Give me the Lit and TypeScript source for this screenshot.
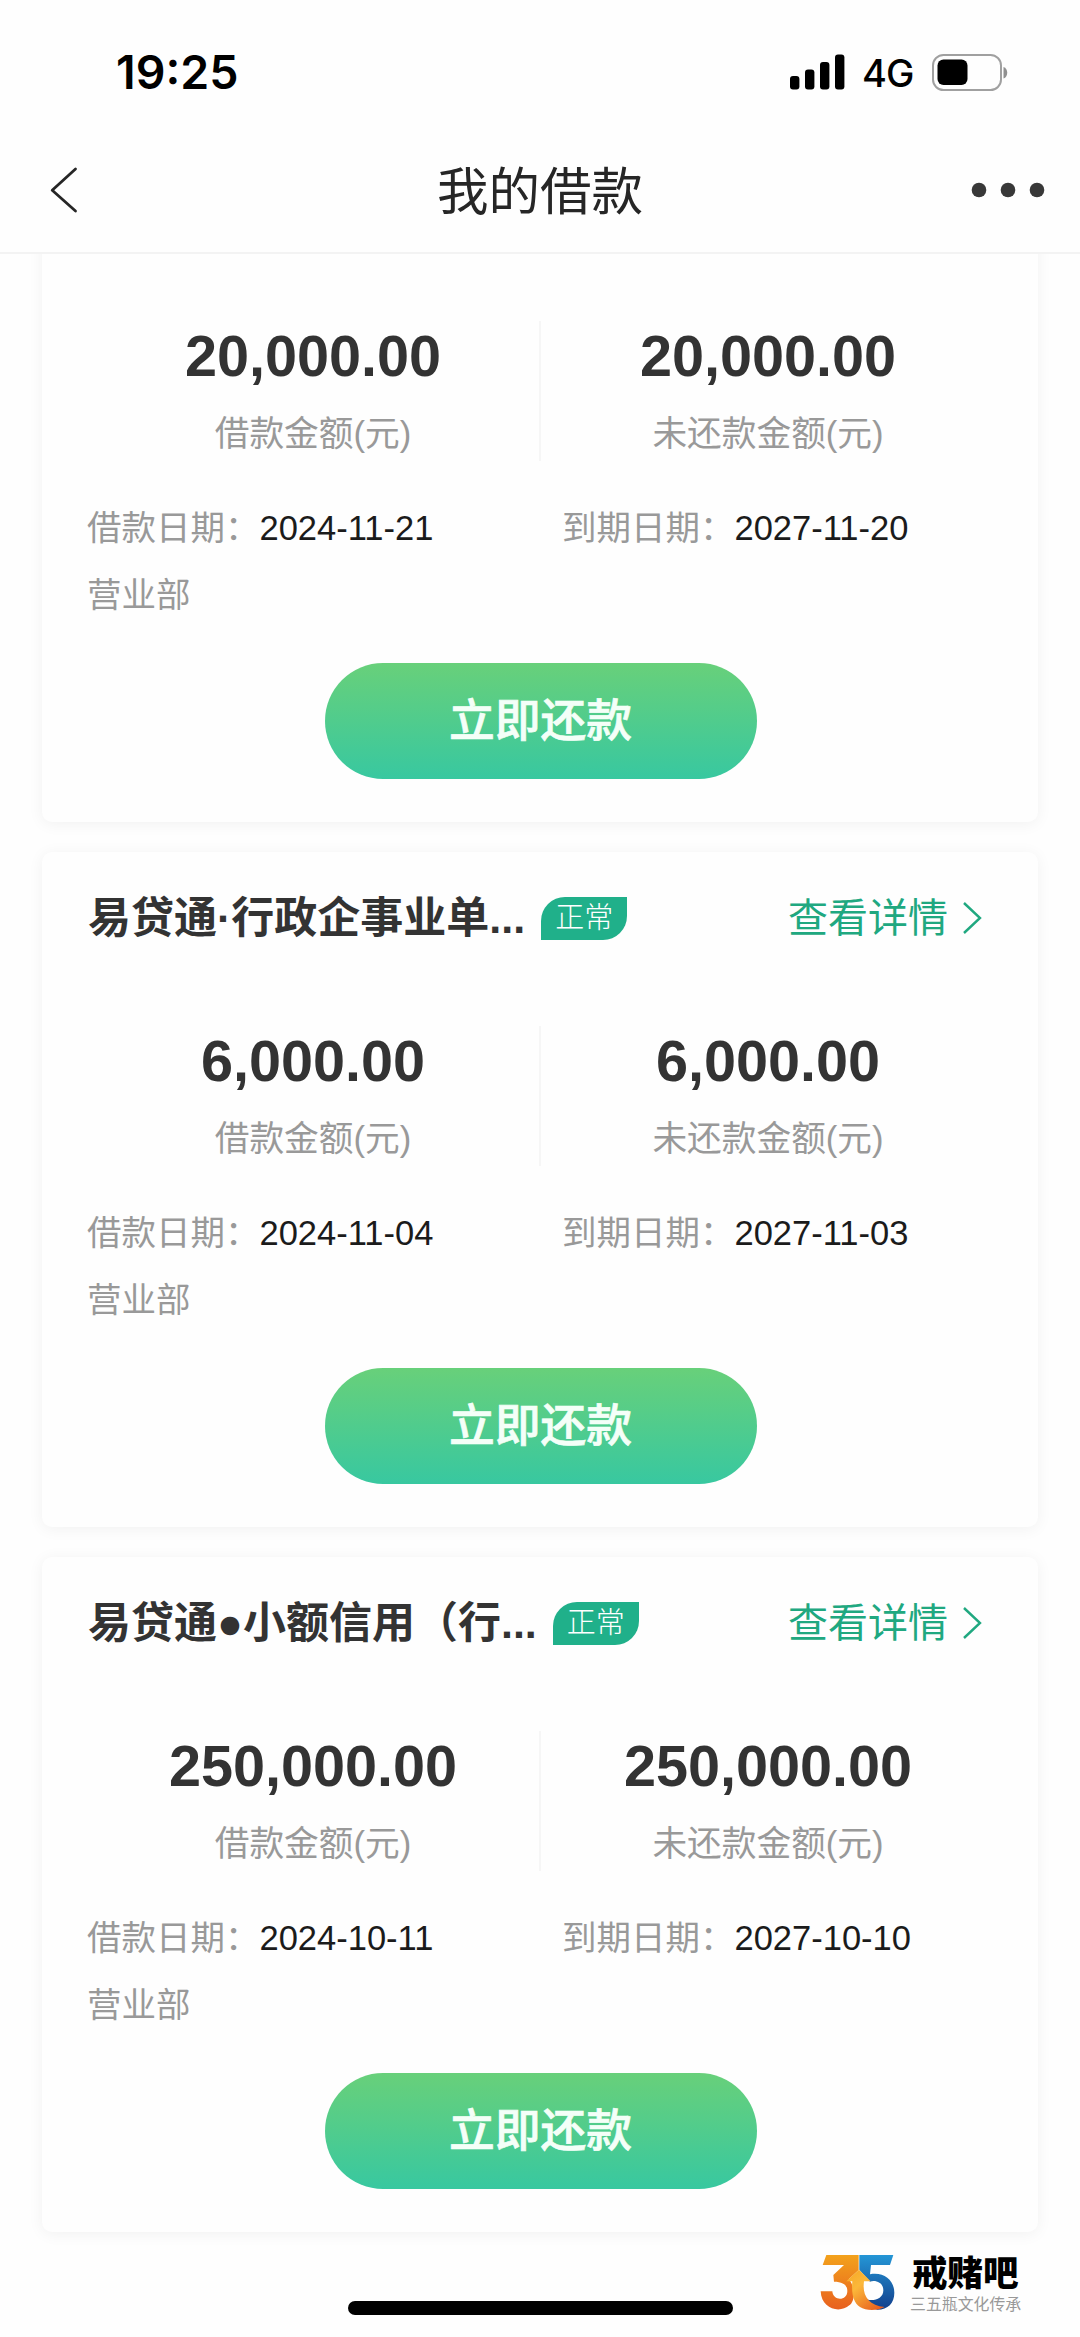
import { LitElement, html, css } from "lit";
import { customElement, property } from "lit/decorators.js";

const sans = css`"Liberation Sans", "Noto Sans CJK SC", sans-serif`;

interface Loan {
  title: string;
  status: string;
  amount: string;
  unpaid: string;
  start: string;
  due: string;
  branch: string;
}

const loans: Loan[] = [
  { title: "", status: "", amount: "20,000.00", unpaid: "20,000.00", start: "2024-11-21", due: "2027-11-20", branch: "营业部" },
  { title: "易贷通·行政企事业单...", status: "正常", amount: "6,000.00", unpaid: "6,000.00", start: "2024-11-04", due: "2027-11-03", branch: "营业部" },
  { title: "易贷通●小额信用（行...", status: "正常", amount: "250,000.00", unpaid: "250,000.00", start: "2024-10-11", due: "2027-10-10", branch: "营业部" },
];

@customElement("status-bar")
export class StatusBar extends LitElement {
  static styles = css`
    :host { display: flex; height: 127px; padding: 34px 72px 0 116px; box-sizing: border-box; align-items: flex-start; justify-content: space-between; color: #000; }
    .time { font: 600 46.5px/76px Inter, sans-serif; }
    .right { display: flex; align-items: center; height: 76px; }
    .net { font: 500 38px/76px Inter, sans-serif; letter-spacing: -1px; margin: 2px 17px 0 16px; width: 53px; }
    svg { display: block; }
  `;
  render() {
    return html`
      <span class="time">19:25</span>
      <div class="right">
        <svg width="56" height="36" viewBox="0 0 56 36">
          <rect x="0" y="22" width="9.4" height="13.5" rx="3"/>
          <rect x="15" y="15.5" width="9.4" height="20" rx="3"/>
          <rect x="30" y="8" width="9.4" height="27.5" rx="3"/>
          <rect x="45" y="0.5" width="9.4" height="35" rx="3"/>
        </svg>
        <span class="net">4G</span>
        <svg width="76" height="37" viewBox="0 0 76 37">
          <rect x="1" y="1" width="68" height="35" rx="10.5" fill="none" stroke="#a0a0a0" stroke-width="2"/>
          <rect x="5.5" y="5.5" width="30" height="25.5" rx="6"/>
          <path d="M71.500 13c5 1.500 5 10 0 11.500z" fill="#909090"/>
        </svg>
      </div>`;
  }
}

@customElement("nav-bar")
export class NavBar extends LitElement {
  static styles = css`
    :host { display: grid; grid-template-columns: 1fr auto 1fr; align-items: center; height: 127px; box-sizing: border-box; padding: 0 34px 0 49px; border-bottom: 2px solid #f3f3f3; }
    .title { font: 400 51.5px/76px ${sans}; color: #262626; margin: 4px 0 0 -15px; }
    .more { justify-self: end; }
    svg { display: block; }
  `;
  render() {
    return html`
      <svg width="30" height="48" viewBox="0 0 30 48"><path d="M26.500 3 3.200 24.300 26.500 45" fill="none" stroke="#262626" stroke-width="2.8" stroke-linecap="round" stroke-linejoin="round"/></svg>
      <span class="title">我的借款</span>
      <svg class="more" width="76" height="18" viewBox="0 0 76 18" fill="#383838"><circle cx="9" cy="9" r="7.3"/><circle cx="38" cy="9" r="7.3"/><circle cx="67" cy="9" r="7.3"/></svg>`;
  }
}

@customElement("loan-card")
export class LoanCard extends LitElement {
  @property({ attribute: false }) loan!: Loan;
  static styles = css`
    :host { display: flex; flex-direction: column; height: 675px; box-sizing: border-box; padding: 0 43px 43px 45px; border-radius: 10px; background: #fefefe; box-shadow: 0 2px 16px rgba(0, 0, 0, 0.055); font-family: ${sans}; }
    .head { display: flex; align-items: center; height: 132px; padding-right: 13px; }
    .title { font-size: 43px; font-weight: 700; line-height: 60px; color: #333; margin-left: 1px; white-space: nowrap; }
    .badge { width: 86px; height: 43px; margin-left: 16px; border-radius: 24px 0 24px 0; background: #20b08a; color: #fff; font: 300 29px/43px ${sans}; text-align: center; }
    .link { display: flex; align-items: center; gap: 14px; margin-left: auto; color: #20a880; font-size: 40px; line-height: 60px; }
    .amounts { display: grid; grid-template-columns: 452px 1fr; margin: 42px 0 0 0; height: 140px; }
    .cell { display: flex; flex-direction: column; align-items: center; }
    .cell + .cell { border-left: 2px solid #f6f6f6; }
    .num { font-size: 57.6px; font-weight: 700; line-height: 66px; color: #333; margin-top: 2px; }
    .label { font-size: 34.7px; line-height: 50px; color: #999; margin-top: 20px; }
    .dates { display: grid; grid-template-columns: 475px 1fr; margin-top: 41px; font-size: 34.5px; line-height: 52px; color: #999; }
    .date { color: #1b1b1b; }
    .branch { font-size: 34.5px; line-height: 52px; color: #999; margin-top: 15px; }
    .pay { align-self: center; margin: auto 0 0 -1px; width: 432px; height: 116px; border-radius: 58px; background: linear-gradient(#68d07a, #38c8a0); color: #f4fff8; text-align: center; font-size: 45.8px; font-weight: 500; line-height: 118px; -webkit-text-stroke: 0.7px #f4fff8; }
  `;
  render() {
    const l = this.loan;
    return html`
      <div class="head">
        ${l.title ? html`
          <span class="title">${l.title}</span>
          <span class="badge">${l.status}</span>
          <span class="link">查看详情
            <svg width="20" height="34" viewBox="0 0 20 34"><path d="M2 2 18 17 2 32" fill="none" stroke="#20a880" stroke-width="2.4"/></svg>
          </span>` : ""}
      </div>
      <div class="amounts">
        <div class="cell"><span class="num">${l.amount}</span><span class="label">借款金额(元)</span></div>
        <div class="cell"><span class="num">${l.unpaid}</span><span class="label">未还款金额(元)</span></div>
      </div>
      <div class="dates">
        <span>借款日期：<span class="date">${l.start}</span></span>
        <span>到期日期：<span class="date">${l.due}</span></span>
      </div>
      <div class="branch">${l.branch}</div>
      <div class="pay">立即还款</div>`;
  }
}

@customElement("brand-mark")
export class BrandMark extends LitElement {
  static styles = css`
    :host { display: flex; align-items: flex-start; gap: 16px; }
    .logo { display: block; margin-top: 4px; }
    .words { display: flex; flex-direction: column; }
    .name { font: 900 35.5px/42px "Noto Sans CJK SC", sans-serif; color: #000; }
    .sub { font: 400 15.9px/22px "Noto Sans CJK SC", sans-serif; color: #999; margin: 1px 0 0 -2px; }
  `;
  render() {
    return html`
      <svg class="logo" width="76" height="58" viewBox="118 105 228 174">
        <defs>
          <linearGradient id="o" x1="0" y1="0" x2="0" y2="1"><stop offset="0" stop-color="#f3a21c"/><stop offset="1" stop-color="#e8601f"/></linearGradient>
          <linearGradient id="b" x1="0" y1="0" x2="0" y2="1"><stop offset="0" stop-color="#2496d6"/><stop offset="1" stop-color="#123f8c"/></linearGradient>
          <linearGradient id="y" x1="0" y1="0" x2="0.8" y2="1"><stop offset="0" stop-color="#f6a623"/><stop offset="0.4" stop-color="#fbb83a"/><stop offset="1" stop-color="#e8601f"/></linearGradient>
        </defs>
        <path fill="url(#o)" d="M137 108H234V153L204 181C222 198 226 245 206 259C178 284 122 271 120 217H155C157 247 200 247 200 216C200 198 187 188 160 188L158 168L190 138H126Z"/>
        <path fill="url(#b)" d="M236 108H338L328 138H271L268 166C310 158 341 184 341 221C341 252 322 272 290 272C270 268 258 256 250 238C270 249 308 244 308 214C308 187 280 182 268 188L236 152Z"/>
        <path fill="url(#y)" d="M235 152 270 187H250C244 228 262 258 312 264C290 276 256 276 238 264C218 250 212 226 215 187H197Z"/>
      </svg>
      <div class="words"><span class="name">戒赌吧</span><span class="sub">三五瓶文化传承</span></div>`;
  }
}

@customElement("app-root")
export class AppRoot extends LitElement {
  static styles = css`
    :host { display: flex; flex-direction: column; width: 1080px; height: 2337px; overflow: hidden; background: #fefefe; position: relative; }
    .scroll { flex: 1; min-height: 0; overflow: hidden; display: flex; flex-direction: column; justify-content: flex-end; gap: 30px; padding: 0 42px 105px; }
    loan-card { flex: none; }
    .home { position: absolute; left: 348px; bottom: 22px; width: 385px; height: 14px; border-radius: 7px; background: #000; }
    .mark { position: absolute; left: 820px; top: 2250px; }
  `;
  render() {
    return html`
      <status-bar></status-bar>
      <nav-bar></nav-bar>
      <div class="scroll">${loans.map((l) => html`<loan-card .loan=${l}></loan-card>`)}</div>
      <brand-mark class="mark"></brand-mark>
      <div class="home"></div>`;
  }
}
